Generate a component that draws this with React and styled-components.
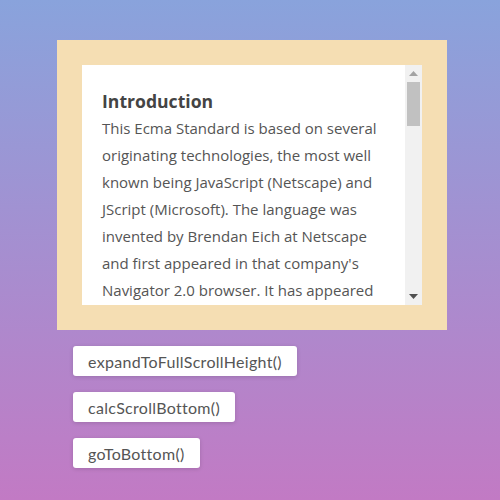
import React from 'react'
import styled, { createGlobalStyle } from 'styled-components'

const GlobalStyle = createGlobalStyle`
  html, body {
    margin: 0;
    padding: 0;
    height: 100%;
  }
  body {
    background: linear-gradient(to bottom, #89a3dc, #c27ac4);
    font-family: "Open Sans", "Noto Sans", sans-serif;
  }
`

const Page = styled.div`
  width: 500px;
  height: 500px;
  box-sizing: border-box;
  padding: 40px 0 0 57px;
  display: flex;
  flex-direction: column;
`

const Frame = styled.div`
  width: 390px;
  box-sizing: border-box;
  padding: 25px;
  background: #f5deb3;
`

const Viewport = styled.div`
  display: flex;
  height: 240px;
  background: #fff;
`

const Content = styled.div`
  flex: 1;
  overflow-y: auto;
  scrollbar-width: none;
  box-sizing: border-box;
  padding: 23px 20px 20px 20px;
  color: #555;
  font-size: 15px;
  line-height: 27px;

  &::-webkit-scrollbar {
    display: none;
  }

  h3 {
    margin: 0;
    color: #444;
    font-size: 17.6px;
    font-weight: 700;
  }
  p {
    margin: 0;
  }
`

const Track = styled.div`
  width: 17px;
  display: flex;
  flex-direction: column;
  background: #f1f1f1;
`

const Arrow = styled.div`
  height: 17px;
  display: flex;
  align-items: center;
  justify-content: center;
  svg {
    display: block;
  }
`

const Rail = styled.div`
  flex: 1;
  padding: 0 2px;
`

const Thumb = styled.div`
  height: 44px;
  background: #c1c1c1;
`

const Actions = styled.div`
  display: flex;
  flex-direction: column;
  align-items: flex-start;
  gap: 16px;
  padding: 16px 0 0 16px;
`

const Button = styled.button`
  height: 30px;
  padding: 0 15px;
  border: none;
  border-radius: 3px;
  background: #fff;
  color: #555;
  font-family: "Lato", "Open Sans", sans-serif;
  font-size: 16px;
  letter-spacing: 0.3px;
  box-shadow: 0 1px 4px rgba(0, 0, 0, 0.15);
  cursor: pointer;
`

const App = () => {
  return (
    <Page>
      <GlobalStyle />
      <Frame>
        <Viewport>
          <Content>
            <h3>Introduction</h3>
            <p>
              This Ecma Standard is based on several originating technologies, the most well
              known being JavaScript (Netscape) and JScript (Microsoft). The language was
              invented by Brendan Eich at Netscape and first appeared in that company's
              Navigator 2.0 browser. It has appeared in all subsequent browsers from Netscape
              and in all browsers from Microsoft starting with Internet Explorer 3.0. The
              development of this Standard started in November 1996. The first edition of
              this Ecma Standard was adopted by the Ecma General Assembly of June 1997. That
              Ecma Standard was submitted to ISO/IEC JTC 1 for adoption under the fast-track
              procedure, and approved as international standard ISO/IEC 16262, in April 1998.
              The Ecma General Assembly of June 1998 approved the second edition of ECMA-262
              to keep it fully aligned with ISO/IEC 16262. Changes between the first and the
              second edition are editorial in nature. The third edition of the Standard
              introduced powerful regular expressions, better string handling, new control
              statements, try/catch exception handling, tighter definition of errors,
              formatting for numeric output and minor changes in anticipation of forthcoming
              internationalisation facilities and future language growth. The third edition
              of the ECMAScript standard was adopted by the Ecma General Assembly of December
              1999 and published as ISO/IEC 16262:2002 in June 2002.
            </p>
          </Content>
          <Track>
            <Arrow>
              <svg width="9" height="5" viewBox="0 0 9 5">
                <polygon points="0,5 9,5 4.5,0" fill="#a3a3a3" />
              </svg>
            </Arrow>
            <Rail>
              <Thumb />
            </Rail>
            <Arrow>
              <svg width="9" height="5" viewBox="0 0 9 5">
                <polygon points="0,0 9,0 4.5,5" fill="#505050" />
              </svg>
            </Arrow>
          </Track>
        </Viewport>
      </Frame>
      <Actions>
        <Button>expandToFullScrollHeight()</Button>
        <Button>calcScrollBottom()</Button>
        <Button>goToBottom()</Button>
      </Actions>
    </Page>
  )
}

export default App
